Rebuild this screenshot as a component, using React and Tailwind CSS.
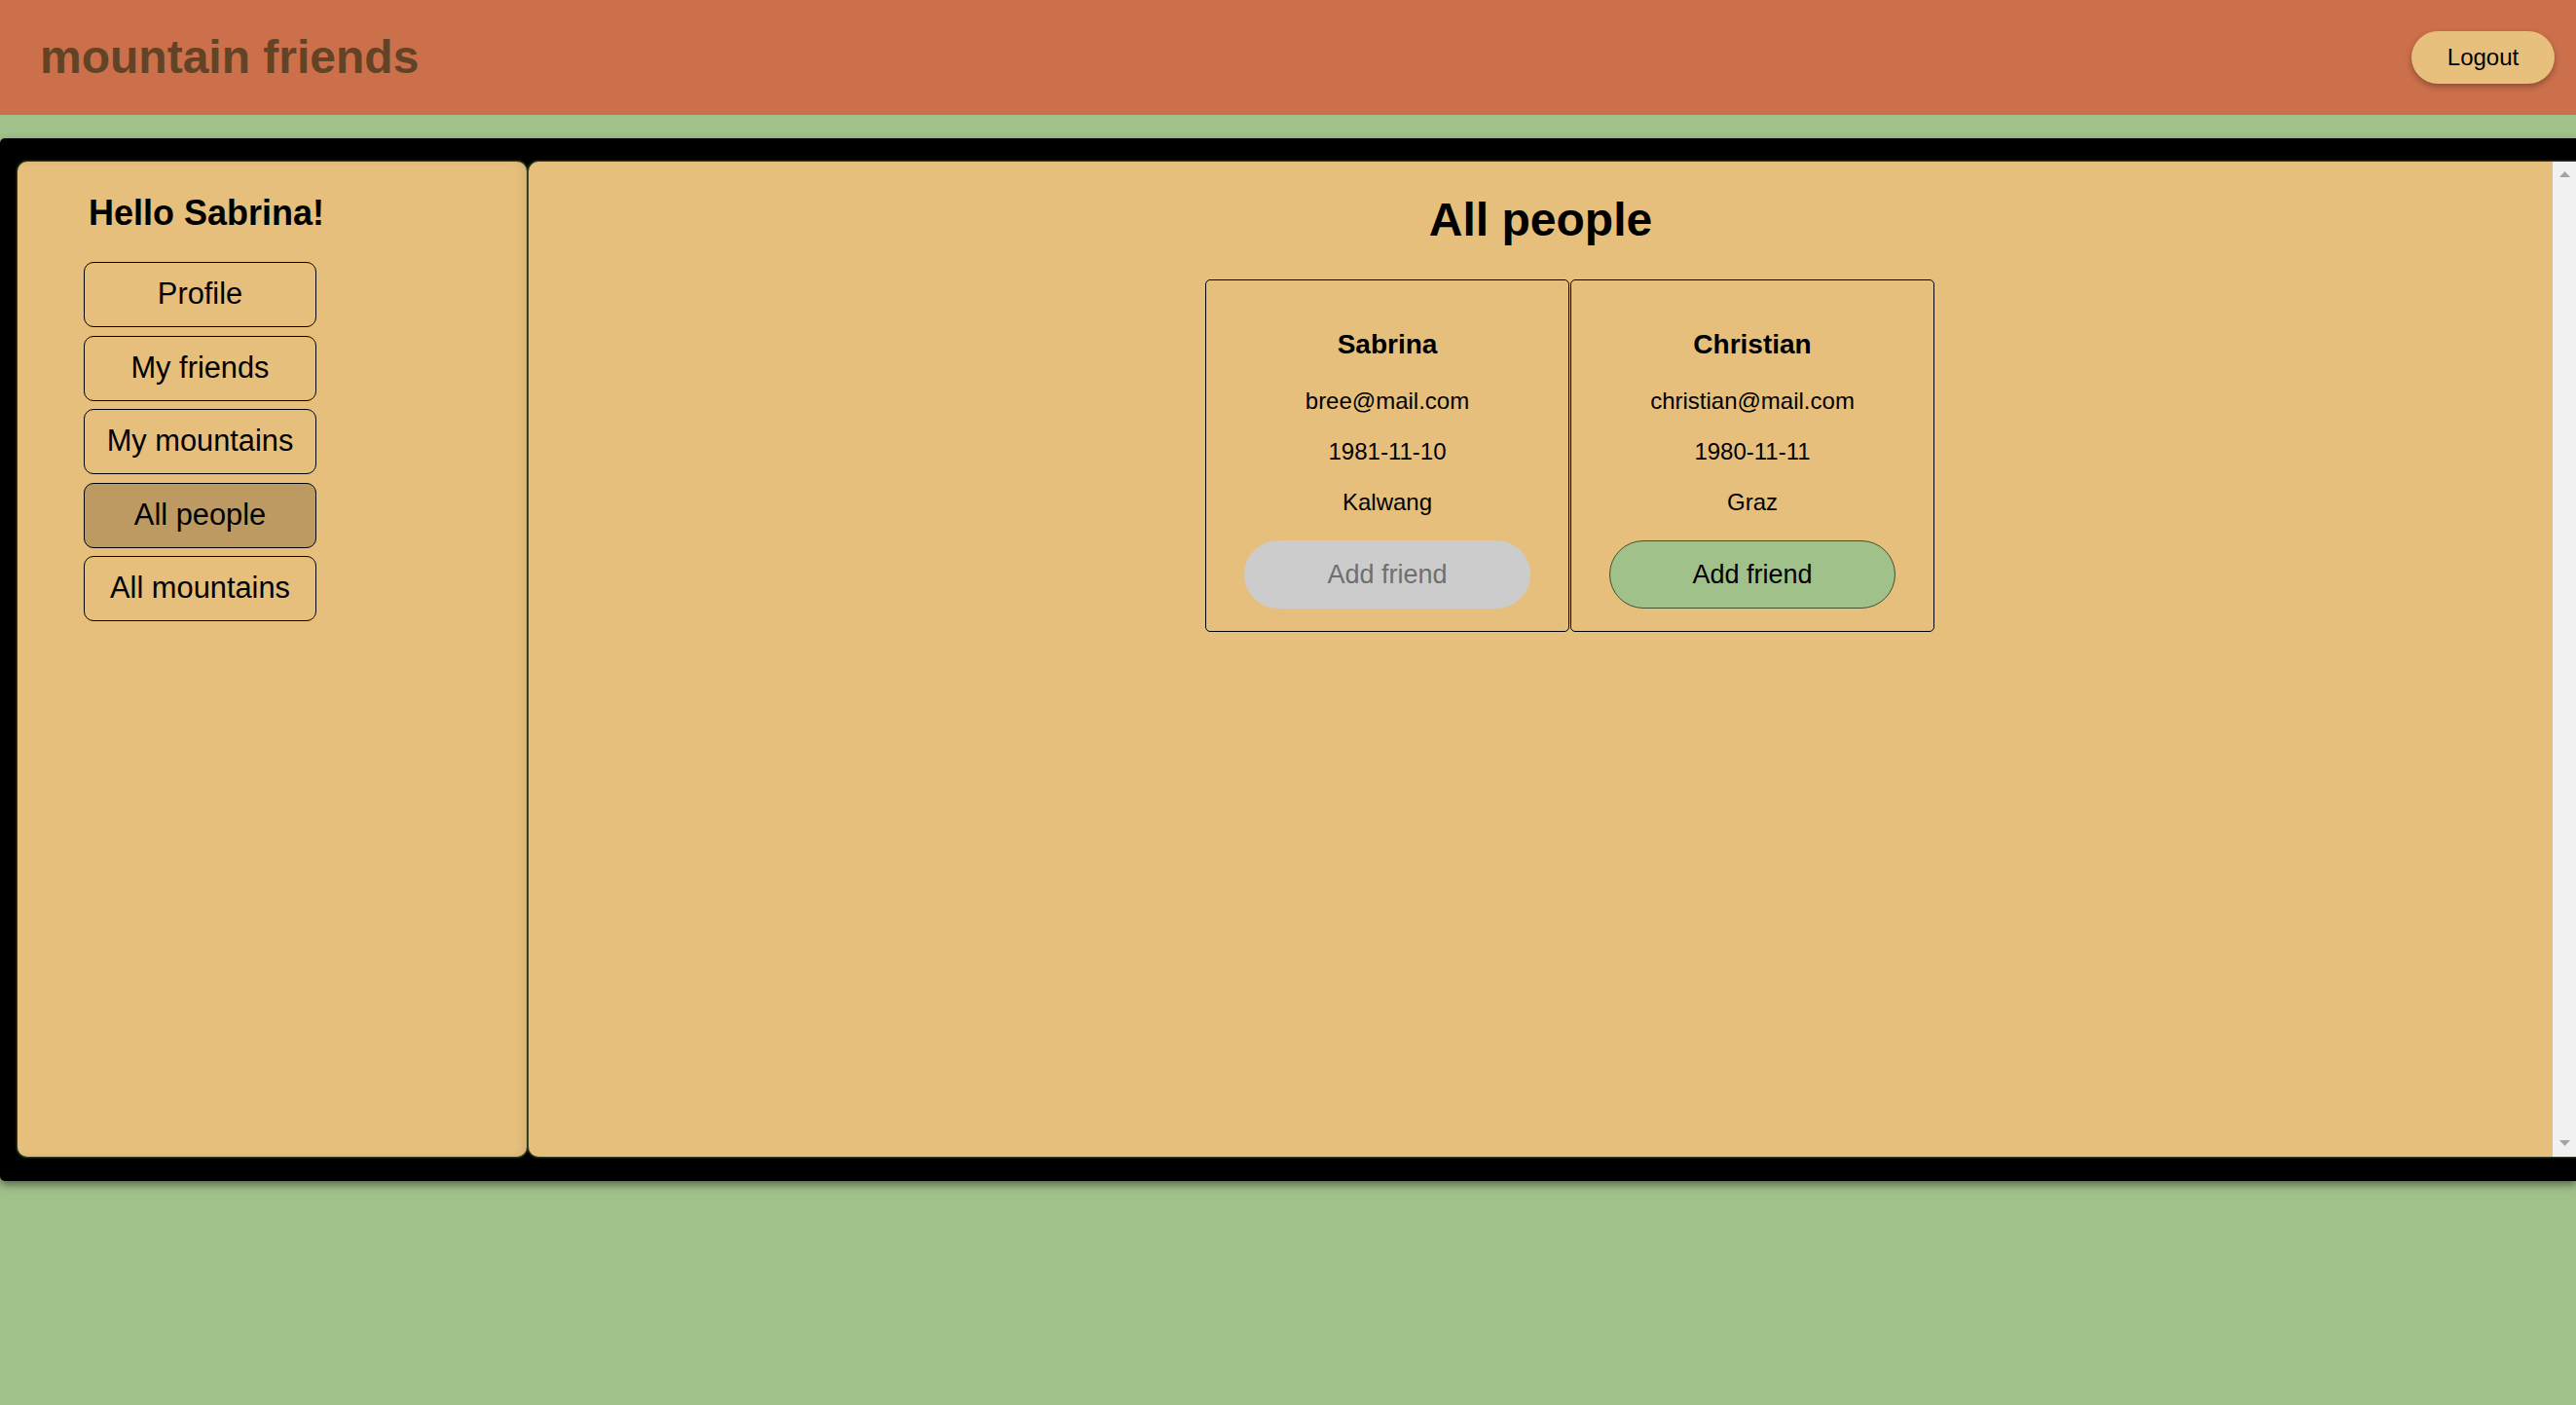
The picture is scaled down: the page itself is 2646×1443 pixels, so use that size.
import React from "react";

const people = [
  { name: "Sabrina", email: "bree@mail.com", born: "1981-11-10", city: "Kalwang", self: true },
  { name: "Christian", email: "christian@mail.com", born: "1980-11-11", city: "Graz", self: false },
];

const nav = ["Profile", "My friends", "My mountains", "All people", "All mountains"];

function Card({ p }) {
  return (
    <div className="w-[374px] h-[362px] border border-black rounded-[5px] flex flex-col items-center pt-[50px] text-black">
      <h3 className="text-[28px] leading-[32px] font-bold">{p.name}</h3>
      <p className="mt-[28px] text-[24px] leading-[28px]">{p.email}</p>
      <p className="mt-[24px] text-[24px] leading-[28px]">{p.born}</p>
      <p className="mt-[24px] text-[24px] leading-[28px]">{p.city}</p>
      {p.self ? (
        <button className="mt-[25px] w-[294px] h-[70px] rounded-full bg-[#cccccc] text-[#6f6f6f] text-[27px]">
          Add friend
        </button>
      ) : (
        <button className="mt-[25px] w-[294px] h-[70px] rounded-full bg-[#a0c18a] border border-[#3f5230] text-black text-[27px]">
          Add friend
        </button>
      )}
    </div>
  );
}

export default function App() {
  return (
    <div className="min-h-screen bg-[#a0c18a] font-['Liberation_Sans',Arial,sans-serif]">
      <header className="h-[118px] bg-[#cc6f4b] flex items-center justify-between pl-[41px] pr-[22px]">
        <h1 className="text-[48px] leading-none font-bold text-[#634325]">mountain friends</h1>
        <button className="w-[147px] h-[54px] rounded-full bg-[#e8c07d] text-black text-[24px] shadow-[0_3px_6px_rgba(0,0,0,0.3)]">
          Logout
        </button>
      </header>

      <div className="mt-[24px] h-[1071px] bg-black rounded-l-[5px] pt-[24px] pb-[25px] pl-[18px] flex gap-[2px] shadow-[0_4px_9px_rgba(0,0,0,0.45)]">
        <aside className="w-[523px] h-full bg-[#e6bf7c] rounded-[10px] shadow-[0_0_2px_1px_#3e5230,inset_-5px_0_6px_rgba(0,0,0,0.06)] pt-[32px] pl-[68px]">
          <div className="flex flex-col w-[260px]">
            <h2 className="ml-[5px] whitespace-nowrap text-[36px] leading-[41px] font-bold text-black">Hello Sabrina!</h2>
            <nav className="mt-[30px] flex flex-col gap-[8.5px]">
              {nav.map((n) => (
                <button
                  key={n}
                  className={
                    n === "All people"
                      ? "w-[239px] h-[67px] rounded-[10px] border border-black bg-[#bd9a62] text-black text-[30.8px] flex items-center justify-center"
                      : "w-[239px] h-[67px] rounded-[10px] border border-black bg-transparent text-black text-[30.8px] flex items-center justify-center"
                  }
                >
                  {n}
                </button>
              ))}
            </nav>
          </div>
        </aside>

        <main className="flex-1 h-full bg-[#e6bf7c] rounded-l-[10px] shadow-[0_0_2px_1px_#3e5230] flex overflow-hidden">
          <div className="flex-1 flex flex-col pt-[32px]">
            <h2 className="text-[48px] leading-[55px] font-bold text-center text-black">All people</h2>
            <div className="mt-[34px] pl-[60px] flex justify-center gap-[1px]">
              {people.map((p) => (
                <Card key={p.name} p={p} />
              ))}
            </div>
          </div>
          <div className="w-[24px] h-full bg-[#f1f1f1] flex flex-col items-center justify-between py-[10px]">
            <svg width="11" height="7" viewBox="0 0 11 7">
              <polygon points="5.5,0 11,6 0,6" fill="#a3a3a3" />
            </svg>
            <svg width="11" height="7" viewBox="0 0 11 7">
              <polygon points="0,0 11,0 5.5,6" fill="#a3a3a3" />
            </svg>
          </div>
        </main>
      </div>
    </div>
  );
}
